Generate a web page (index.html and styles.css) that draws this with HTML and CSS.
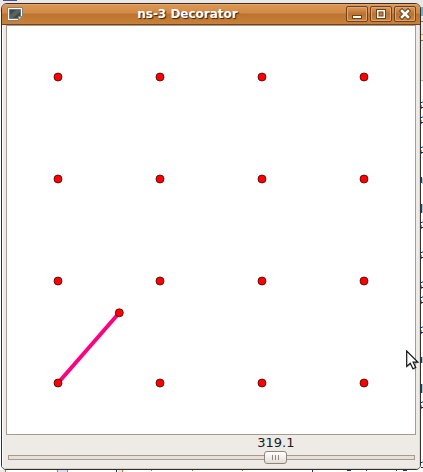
FILE: index.html
```html
<!DOCTYPE html>
<html lang="en">
<head>
<meta charset="utf-8">
<title>ns-3 Decorator</title>
<link rel="stylesheet" href="styles.css">
</head>
<body>
<div class="desktop" aria-hidden="true">
  <svg class="edge edge-right" width="2" height="472" viewBox="0 0 2 472" shape-rendering="crispEdges">
    <path fill="#ebe8e4" d="M0 0h2v80H0z"/>
    <path fill="#4bbcf0" d="M0 7h2v9H0z"/>
    <path fill="#777" d="M0 21h2v1H0zM0 40h2v1H0z"/>
    <path fill="#e5a633" d="M0 34h2v1H0z"/>
    <path fill="#ffe9ab" d="M0 35h2v5H0z"/>
    <path fill="#bbb6b0" d="M0 80h2v1H0z"/>
    <path fill="#1c2458" d="M0 102h1v1H0zM0 107h2v1H0zM0 117h1v1H0zM0 122h2v1H0zM0 147h1v1H0zM0 152h2v1H0zM0 222h1v1H0zM0 227h2v1H0zM0 252h1v1H0zM0 257h2v1H0zM0 282h1v1H0zM0 287h2v1H0zM0 297h1v1H0zM0 302h2v1H0zM0 327h1v1H0zM0 332h2v1H0zM0 402h1v1H0zM0 407h2v1H0zM0 462h1v1H0zM0 467h2v1H0z"/>
    <path fill="#55b9e8" d="M1 101h1v2H1zM0 105h1v2H0zM1 116h1v2H1zM0 120h1v2H0zM1 146h1v2H1zM0 150h1v2H0zM1 221h1v2H1zM0 225h1v2H0zM1 251h1v2H1zM0 255h1v2H0zM1 281h1v2H1zM0 285h1v2H0zM1 296h1v2H1zM0 300h1v2H0zM1 326h1v2H1zM0 330h1v2H0zM1 401h1v2H1zM0 405h1v2H0zM1 461h1v2H1z"/>
    <path fill="#c5682b" d="M0 108h1v1H0zM0 123h1v1H0zM0 153h1v1H0zM0 228h1v1H0zM0 258h1v1H0zM0 288h1v1H0zM0 303h1v1H0zM0 333h1v1H0zM0 408h1v1H0z"/>
    <path fill="#64234f" d="M0 177h1v6H0zM0 204h1v9H0zM0 357h1v6H0zM0 384h1v9H0z"/>
    <path fill="#95ceef" d="M1 178h1v6H1zM1 204h1v9H1zM1 357h1v6H1zM1 384h1v9H1z"/>
  </svg>
  <svg class="edge edge-bottom" width="423" height="2" viewBox="0 0 423 2" shape-rendering="crispEdges">
    <path fill="#ebe8e4" d="M0 0h6v2H0zM118 0h6v2h-6z"/>
    <path fill="#8b8680" d="M5 0h1v2H5zM57 0h1v2h-1zM67 0h1v2h-1z"/>
    <path fill="#d6e1f3" d="M58 0h9v2h-9z"/>
    <path fill="#333" d="M116 0h1v2h-1z"/>
    <path fill="#b97a3c" d="M122 0h1v2h-1zM151 0h1v1h-1zM192 0h1v1h-1zM242 0h1v1h-1z"/>
    <path fill="#26376b" d="M312 0h1v2h-1zM347 0h4v1h-4zM366 0h1v1h-1zM396 0h1v1h-1zM403 0h4v1h-4z"/>
  </svg>
  <span class="top-mark"></span>
</div>

<main class="window">
  <header class="titlebar">
    <svg class="app-icon" width="16" height="14" viewBox="0 0 16 14" aria-hidden="true">
      <path d="M.5.5h15v9L11.500 13.500H.5z" fill="#fafaf8" stroke="#85837c"/>
      <path d="M2.500 2.500h11v6.500L11 11.500H2.500z" fill="#414947" stroke="#6f7370"/>
      <path d="M3 8l6-5h4v2L6 11H3z" fill="#59625e"/>
      <path d="M11.500 13V9.500H15z" fill="#deded9" stroke="#85837c"/>
    </svg>
    <h1 class="title">ns-3 Decorator</h1>
    <div class="controls">
      <button type="button" class="control" aria-label="Minimize">
        <svg width="20" height="14" viewBox="0 0 20 14" shape-rendering="crispEdges"><path fill="#70401a" d="M5 8h10v4H5z"/><path fill="#fff" d="M6 9h8v2H6z"/></svg>
      </button>
      <button type="button" class="control" aria-label="Maximize">
        <svg width="20" height="14" viewBox="0 0 20 14"><path fill="#70401a" d="M5 2h10v10H5z"/><path fill="#fff" d="M6 3h8v8H6z"/><path fill="#70401a" d="M7.500 4.500h5v5h-5z"/><path fill="#c58343" d="M8.500 5.500h3v3h-3z"/></svg>
      </button>
      <button type="button" class="control" aria-label="Close">
        <svg width="20" height="14" viewBox="0 0 20 14"><path d="M7 4l6 6M13 4l-6 6" stroke="#70401a" stroke-width="4.500" stroke-linecap="square"/><path d="M7 4l6 6M13 4l-6 6" stroke="#fff" stroke-width="2.500" stroke-linecap="square"/></svg>
      </button>
    </div>
  </header>

  <div class="content">
    <svg class="canvas" viewBox="0 0 408 408" role="img" aria-label="Node topology">
      <path d="M51 357L112.300 286.800" stroke="#ff0080" stroke-width="4"/>
      <g fill="#f00" stroke="#4d0000" stroke-width=".8">
        <circle cx="51" cy="51" r="4"/><circle cx="153" cy="51" r="4"/><circle cx="255" cy="51" r="4"/><circle cx="357" cy="51" r="4"/>
        <circle cx="51" cy="153" r="4"/><circle cx="153" cy="153" r="4"/><circle cx="255" cy="153" r="4"/><circle cx="357" cy="153" r="4"/>
        <circle cx="51" cy="255" r="4"/><circle cx="153" cy="255" r="4"/><circle cx="255" cy="255" r="4"/><circle cx="357" cy="255" r="4"/>
        <circle cx="51" cy="357" r="4"/><circle cx="153" cy="357" r="4"/><circle cx="255" cy="357" r="4"/><circle cx="357" cy="357" r="4"/>
        <circle cx="112.300" cy="286.800" r="4"/>
      </g>
    </svg>
    <div class="scale" style="--before: 319.1fr; --after: 158.9fr">
      <label class="value" for="time">319.1</label>
      <input class="slider" id="time" type="range" min="0" max="478" step="0.1" value="319.1">
    </div>
  </div>
</main>

<svg class="cursor" width="14" height="22" viewBox="0 0 14 22" aria-hidden="true">
  <path d="M1.500 2.500v15l3.500-3 2.500 5.500 3-1.500-2.500-5h4.500z" fill="#888" opacity=".4"/>
  <path d="M.7 1v15.500l3.600-3.300 2.600 5.600 2.800-1.300-2.500-5.300h4.600z" fill="#fff" stroke="#111" stroke-width="1.200"/>
</svg>
</body>
</html>
```
FILE: styles.css
```css
* {
  box-sizing: border-box;
}

body {
  margin: 0;
  padding: 3px 2px 2px 1px;
  position: relative;
  background: #fff;
  color: #1a1a1a;
  font-family: "DejaVu Sans", sans-serif;
  font-size: 13px;
}

.desktop {
  position: absolute;
  inset: 0;
  overflow: hidden;
  background: linear-gradient(#ebe8e6 12px, #fff 12px);
}

.edge {
  position: absolute;
  right: 0;
  bottom: 0;
}

.edge-right {
  top: 0;
}

.top-mark {
  position: absolute;
  top: 0;
  left: 3px;
  width: 14px;
  height: 1px;
  background: #4b4a9f;
}

.window {
  position: relative;
  overflow: hidden;
  border: 1px solid #35302b;
  border-radius: 6px 6px 5px 5px;
  background: #eeebe7;
}

.titlebar {
  display: flex;
  align-items: center;
  height: 21px;
  padding: 0 4px 0 5px;
  border-bottom: 1px solid #70401f;
  background: linear-gradient(#eeb481 0, #dd9650 1px, #d18b49 9px, #bb722e 10px, #c98239 20px);
}

.app-icon {
  flex: none;
}

.title {
  flex: 1;
  margin: 0;
  padding-left: 6px;
  color: #fff;
  font-size: 12px;
  line-height: 20px;
  text-align: center;
  text-shadow: 1px 1px 1px #38200c;
}

.controls {
  display: flex;
  gap: 2px;
}

.control {
  display: block;
  width: 22px;
  height: 16px;
  padding: 0;
  border: 1px solid #70401f;
  border-radius: 2px;
  background: linear-gradient(#d99a60, #bb732e 50%, #c78542);
  box-shadow: inset 0 0 0 1px #dfa774;
}

.control svg {
  display: block;
}

.content {
  padding: 0 3px 4px;
  border: solid;
  border-width: 0 1px 1px;
  border-color: #fbfcfd #dbd5cd #d6cec4 #fbfcfd;
}

.canvas {
  display: block;
  width: 100%;
  border: 1px solid #a79b8f;
  background: #fff;
}

.scale {
  display: grid;
  grid-template-columns: var(--before) 23px var(--after);
  padding: 0 1px 0 2px;
}

.value {
  grid-column: 2;
  display: flex;
  justify-content: center;
  line-height: 16px;
  white-space: nowrap;
}

.slider {
  grid-column: 1 / -1;
  appearance: none;
  width: 100%;
  height: 13px;
  margin: 0;
  background: transparent;
}

.slider::-webkit-slider-runnable-track {
  height: 5px;
  border: 1px solid #a79b8f;
  background: #e6e0d9;
}

.slider::-webkit-slider-thumb {
  appearance: none;
  width: 23px;
  height: 13px;
  margin-top: -5px;
  border: 1px solid #8e8780;
  border-radius: 3px;
  background:
    linear-gradient(#8e8780, #8e8780) 7px 3px / 1px 5px no-repeat,
    linear-gradient(#8e8780, #8e8780) 10px 3px / 1px 5px no-repeat,
    linear-gradient(#8e8780, #8e8780) 13px 3px / 1px 5px no-repeat,
    linear-gradient(#fff, #e3ded8);
}

.cursor {
  position: absolute;
  top: 350px;
  left: 406px;
}
```
